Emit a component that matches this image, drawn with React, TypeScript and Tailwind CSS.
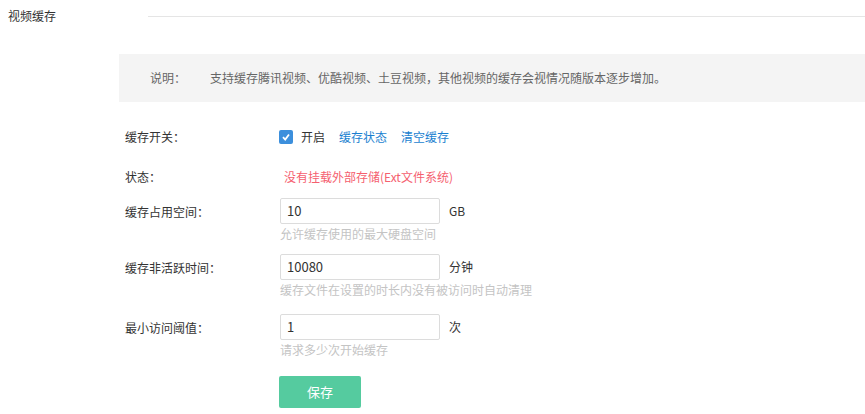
export default function App() {
  const f = { fontFamily: '"Noto Sans CJK SC", "Noto Sans", sans-serif' };
  const Row = ({ label, value, unit, hint, top }: { label: string; value: string; unit: string; hint: string; top: string }) => (
    <div className={`flex ${top}`}>
      <div className="w-[161px] pt-[5px] pl-[6px] text-[#333]">{label}</div>
      <div>
        <div className="flex items-center">
          <div className="w-[160px] h-[26px] border border-[#dcdcdc] rounded-[2px] flex items-center px-[6px] text-[#333] text-[13px]">{value}</div>
          <span className="ml-[9px] text-[#333]">{unit}</span>
        </div>
        <div className="mt-[1px] text-[#c4c4c4]">{hint}</div>
      </div>
    </div>
  );
  return (
    <div className="w-[865px] h-[414px] bg-white text-[12px] relative overflow-hidden" style={f}>
      <div className="flex items-start">
        <div className="pl-[8px] pt-[7px] w-[148px] text-[#333]">视频缓存</div>
        <div className="flex-1 mt-[16px] h-px bg-[#e5e5e5]" />
      </div>
      <div className="ml-[119px] mt-[29px] h-[48px] bg-[#f4f4f4] flex items-center text-[#666]">
        <span className="pl-[31px] w-[91px]">说明：</span>
        <span>支持缓存腾讯视频、优酷视频、土豆视频，其他视频的缓存会视情况随版本逐步增加。</span>
      </div>
      <div className="ml-[119px]">
        <div className="flex mt-[26px] items-center h-[18px]">
          <div className="w-[160px] pl-[6px] text-[#333]">缓存开关：</div>
          <div className="w-[14px] h-[14px] bg-[#3c8fdc] rounded-[2px] flex items-center justify-center">
            <svg width="10" height="10" viewBox="0 0 10 10"><path d="M2 5.2 L4.2 7.5 L8 2.5" stroke="white" strokeWidth="1.8" fill="none" /></svg>
          </div>
          <span className="ml-[8px] text-[#333]">开启</span>
          <span className="ml-[14px] text-[#1a7fd0]">缓存状态</span>
          <span className="ml-[14px] text-[#1a7fd0]">清空缓存</span>
        </div>
        <div className="flex mt-[22px] items-center h-[18px]">
          <div className="w-[165px] pl-[6px] text-[#333]">状态：</div>
          <span className="text-[#f5606f]">没有挂载外部存储(Ext文件系统)</span>
        </div>
        <Row top="mt-[12px]" label="缓存占用空间：" value="10" unit="GB" hint="允许缓存使用的最大硬盘空间" />
        <Row top="mt-[11px]" label="缓存非活跃时间：" value="10080" unit="分钟" hint="缓存文件在设置的时长内没有被访问时自动清理" />
        <Row top="mt-[15px]" label="最小访问阈值：" value="1" unit="次" hint="请求多少次开始缓存" />
        <div className="ml-[160px] mt-[17px] w-[82px] h-[32px] bg-[#55cb9f] rounded-[2px] text-white flex items-center justify-center text-[13px]">保存</div>
      </div>
    </div>
  );
}
